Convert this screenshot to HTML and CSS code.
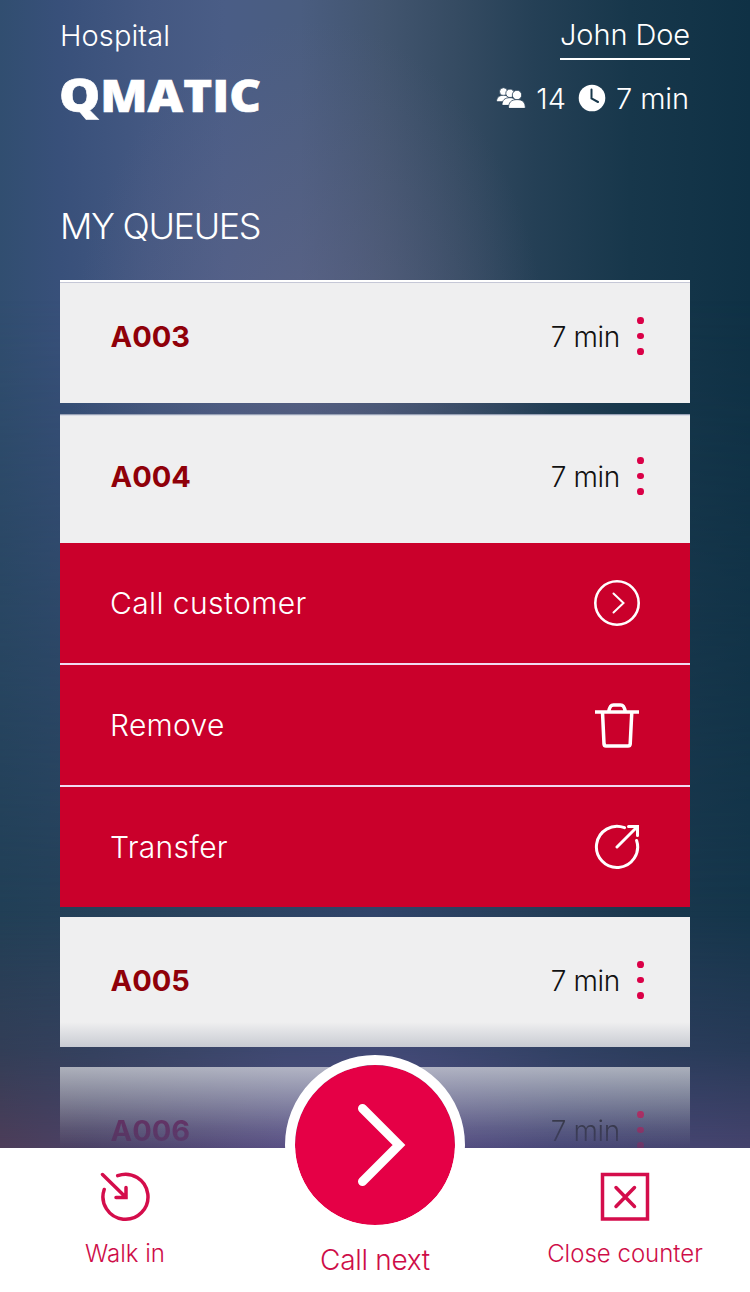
FILE: index.html
```html
<!DOCTYPE html>
<html lang="en">
<head>
<meta charset="utf-8">
<title>My queues</title>
<link rel="stylesheet" href="styles.css">
</head>
<body>
<div class="app">
  <header class="header">
    <div class="branch">
      <span class="branch-name">Hospital</span>
      <svg class="logo" width="204" height="46" viewBox="0 0 204 46"><text x="0" y="33" textLength="202" lengthAdjust="spacingAndGlyphs"><tspan class="initial">Q</tspan>MATIC</text></svg>
    </div>
    <div class="session">
      <a class="user">John Doe</a>
      <div class="stats">
        <svg class="people" width="30" height="22" viewBox="0 0 30 22">
          <g class="person"><circle cx="7.500" cy="4.700" r="4"/><path d="M.5 14.500C.5 10.500 3 8.300 7.500 8.300S13 10.500 14 14.500Z"/></g>
          <g class="person"><circle cx="14" cy="6.300" r="4.200"/><path d="M6 18C6 13 9 10.700 13.800 10.700S20.500 13 21 18Z"/></g>
          <g class="person"><circle cx="21" cy="8" r="4.700"/><path d="M12.500 21C12.500 15.500 15 12.600 21 12.600S29.300 15.500 29.300 21Z"/></g>
        </svg>
        <span class="count">14</span>
        <svg class="clock" width="28" height="28" viewBox="0 0 28 28"><circle cx="14" cy="14" r="13.300"/><path d="M13.500 5.500V14.500L20 18"/></svg>
        <span class="wait">7 min</span>
      </div>
    </div>
  </header>
  <h1 class="title">MY QUEUES</h1>
  <main class="list">
    <div class="row first"><b class="ticket">A003</b><span class="time">7 min</span><span class="dots"><i></i><i></i><i></i></span></div>
    <div class="row open"><b class="ticket">A004</b><span class="time">7 min</span><span class="dots"><i></i><i></i><i></i></span></div>
    <div class="actions">
      <div class="action"><span class="call">Call customer</span>
        <svg width="48" height="48" viewBox="0 0 48 48"><circle cx="24" cy="24" r="21.700"/><path class="thin" d="M20.500 14.500L30.500 24L20.500 33.500"/></svg></div>
      <div class="action"><span>Remove</span>
        <svg width="48" height="48" viewBox="0 0 48 48"><path class="heavy" d="M2 11H46M15.500 11C17 5 18 4 20.500 4H27.500C30 4 31 5 32.500 11M9.500 11L11 43Q11.200 45 13 45H35Q37 45 37.200 43L38.800 11"/></svg></div>
      <div class="action"><span>Transfer</span>
        <svg width="48" height="48" viewBox="0 0 48 48"><path d="M31.500 4.700A20.600 20.600 0 1 0 43.600 17.500M24 24L44.500 3.500M35.500 3.500H44.500V12.500"/></svg></div>
    </div>
    <div class="row fading"><b class="ticket">A005</b><span class="time">7 min</span><span class="dots"><i></i><i></i><i></i></span></div>
    <div class="row last"><b class="ticket">A006</b><span class="time">7 min</span><span class="dots"><i></i><i></i><i></i></span></div>
  </main>
  <nav class="bar">
    <a class="tab">
      <svg width="52" height="52" viewBox="0 0 52 52"><path d="M18.700 4.700A22.500 22.500 0 1 1 5.200 18.500M3.500 3.500L27 26.500M27 16.500V26.500H17"/></svg>
      <span>Walk in</span>
    </a>
    <a class="next">
      <span class="disc"><svg width="160" height="160" viewBox="0 0 160 160"><path d="M67.500 43.500L104 80L67.500 116.500"/></svg></span>
      <span class="next-label">Call next</span>
    </a>
    <a class="tab">
      <svg width="52" height="52" viewBox="0 0 52 52"><path class="box" d="M3.500 3.500H48.500V48H3.500Z"/><path d="M17 16.500L35.500 35.500M35.500 16.500L17 35.500"/></svg>
      <span>Close counter</span>
    </a>
  </nav>
</div>
</body>
</html>
```
FILE: styles.css
```css
* { box-sizing: border-box; }
body { margin: 0; font-family: Inter, "Liberation Sans", sans-serif; font-weight: 300; }
.app {
  width: 750px; height: 1292px; overflow: hidden; position: relative; isolation: isolate;
  display: flex; flex-direction: column; color: #fff;
  background:
    radial-gradient(ellipse 240px 360px at 310px 380px, #6a688c88, #6a688c44 50%, #6a688c00),
    linear-gradient(90deg, #314e70 0, #38507a 8%, #445882 20%, #4a5d86 30%, #4a5d80 40%, #42556f 51%, #354b62 61%, #254056 71%, #17374b 84%, #0f3145 100%);
}
.app::before, .app::after { content: ""; position: absolute; inset: 0; z-index: -1; }
.app::before {
  background: linear-gradient(90deg, #213f56 0, #29435e 25%, #30446a 50%, #263f5b 70%, #1a384e 86%, #14354a 100%);
  mask-image: linear-gradient(#0000 300px, #000 910px);
}
.app::after {
  background: linear-gradient(90deg, #4d3d59 0, #4b4166 12%, #5a5085 38%, #5a5087 55%, #484777 75%, #45436d 100%);
  mask-image: linear-gradient(#0000 910px, #0006 1050px, #000 1150px);
}
.header { height: 140px; padding: 0 60px; display: flex; justify-content: space-between; }
.branch { display: flex; flex-direction: column; align-items: flex-start; }
.branch-name { margin-top: 18px; font-size: 29px; line-height: 36px; letter-spacing: .1px; }
.logo { margin: 25px 0 0 -1px; overflow: visible; }
.logo text { font: 800 43.500px "Open Sans", sans-serif; fill: #fff; stroke: #fff; stroke-width: .6; }
.logo .initial { font-size: 46px; }
.session { display: flex; flex-direction: column; align-items: flex-end; }
.user { height: 60px; padding-top: 17px; font-size: 29px; line-height: 36px; letter-spacing: -.1px; border-bottom: 2px solid #fff; }
.stats { height: 76px; display: flex; align-items: center; font-size: 29px; }
.people { margin-right: 10px; }
.person { fill: #fff; stroke: #263f55; stroke-width: .8; }
.clock { margin: 0 10px 0 12px; fill: #fff; }
.clock path { fill: none; stroke: #17374b; stroke-width: 2; }
.wait { margin-right: 1px; letter-spacing: -.1px; }
.title { margin: 0; height: 140px; padding: 63px 60px 0; font-size: 36px; line-height: 46px; font-weight: 300; letter-spacing: -1.35px; }
.list { height: 868px; flex: none; padding: 0 60px; display: flex; flex-direction: column; }
.row { flex: none; height: 130px; padding: 0 46.500px 3px 50.500px; display: flex; align-items: center; background: #efeff0; }
.row.first { height: 123px; padding-bottom: 12px; margin-bottom: 11px; border-top: 2px solid #fff; box-shadow: inset 0 1px #c5c7d6; }
.row.open { height: 129px; padding-bottom: 5px; border-top: 1px solid #98a1b5; box-shadow: inset 0 1px #d9dce5; }
.ticket { flex: 1; color: #8f0009; font-size: 29px; font-weight: 700; }
.time { color: #111; font-size: 28px; margin-right: 17px; letter-spacing: -.4px; }
.dots { display: grid; gap: 9px; margin-bottom: 1px; }
.dots i { width: 6.700px; height: 6.700px; border-radius: 50%; background: #da0047; }
.actions { flex: none; height: 364px; display: grid; gap: 2px; background: #f0daf0; margin-bottom: 10px; }
.action { background: #ca002b; padding: 0 49px 0 50px; display: flex; align-items: center; justify-content: space-between; font-size: 30px; letter-spacing: .3px; }
.call { letter-spacing: .4px; }
svg path, .action circle { fill: none; stroke: #fff; stroke-width: 3; stroke-linecap: round; }
.action circle { stroke-width: 2.600; }
.person path { fill: #fff; stroke: #263f55; stroke-width: .8; }
.action .thin { stroke-width: 2; }
.action .heavy { stroke-width: 3.500px; stroke-linecap: butt; }
.row.fading { margin-bottom: 20px; background: linear-gradient(#efeff0 105px, #c8cbd2 130px); }
.row.last { background: linear-gradient(rgba(240,240,240,.64), rgba(240,240,240,.35) 35px, rgba(240,240,240,.12) 62px, rgba(240,240,240,0) 81px); }
.row.last > * { mask-image: linear-gradient(#0009, #0003); }
.row.last .ticket { color: #5c0345; }
.bar { height: 144px; flex: none; background: #fff; color: #ce0d48; display: grid; grid-template-columns: 250px 250px 250px; position: relative; z-index: 1; }
.tab { display: flex; flex-direction: column; align-items: center; padding-top: 23px; font-size: 24px; line-height: 30px; }
.tab svg path { stroke: #d40d4b; stroke-width: 3.500; }
.tab svg .box { stroke-linecap: butt; }
.tab span { margin-top: 16px; }
.next { display: flex; flex-direction: column; align-items: center; margin-top: -93px; font-size: 28px; line-height: 34px; }
.next-label { letter-spacing: -.3px; }
.disc { width: 180px; height: 180px; flex: none; border: 10px solid #fff; border-radius: 50%; background: #e50046; background-clip: padding-box; margin-bottom: 8px; }
.disc svg { display: block; }
.disc path { stroke-width: 9; }
```
